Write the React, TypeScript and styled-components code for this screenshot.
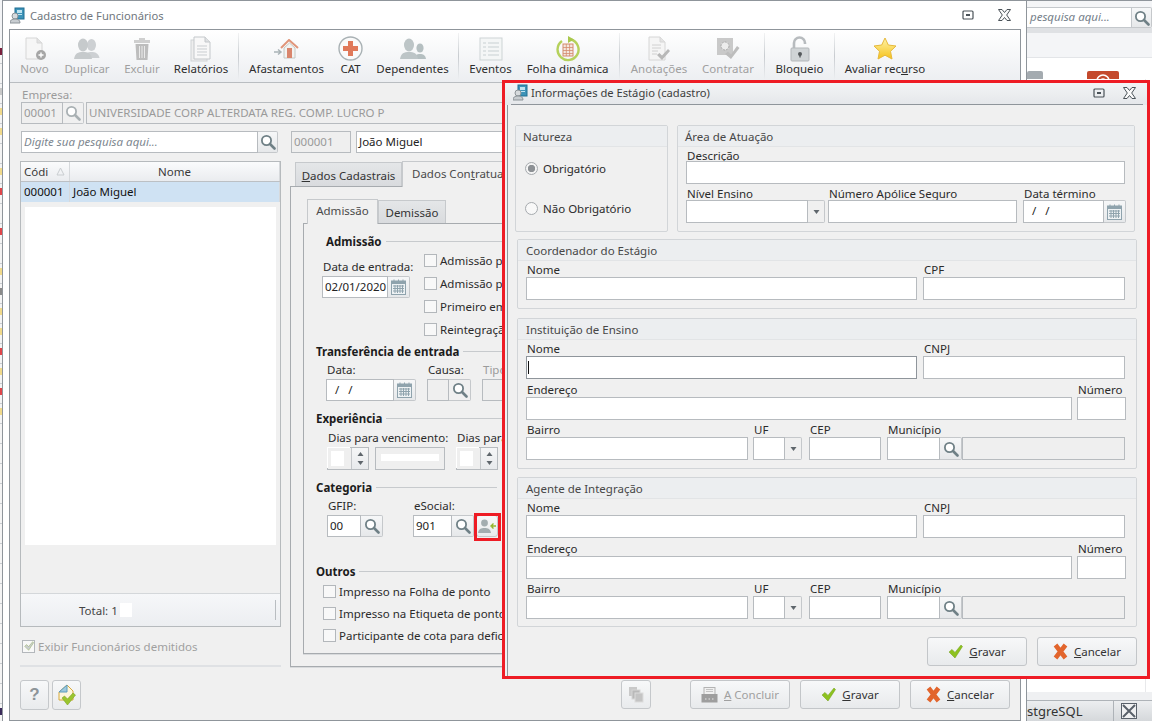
import React from "react";
import styled, { createGlobalStyle } from "styled-components";

const GlobalStyle = createGlobalStyle`
  html, body {
    margin: 0;
    padding: 0;
    background: #f3f4f6;
  }
  body {
    font-family: "Noto Sans", "Open Sans", sans-serif;
    font-size: 11.5px;
    color: #2b2b2b;
  }
  * { box-sizing: border-box; }
`;

const Desktop = styled.div`
  position: relative;
  width: 1152px;
  height: 721px;
  overflow: hidden;
  background: #f3f4f6;
`;

/* windows behind the two open forms */
const LeftStrip = styled.div`
  position: absolute;
  left: 0;
  top: 44px;
  width: 2px;
  display: flex;
  flex-direction: column;
`;

const StripRow = styled.div<{ $mark?: string }>`
  height: 20px;
  border-bottom: 1px solid #c9ccd0;
  background: linear-gradient(
    #f4f4f4 0 4px,
    ${({ $mark }) => $mark || "#f4f4f4"} 4px 11px,
    #f4f4f4 11px
  );
`;

const BackPanel = styled.div`
  position: absolute;
  left: 1027px;
  right: 0;
  top: 0;
  bottom: 0;
  display: flex;
  flex-direction: column;
  background: #fff;
  border-top: 1px solid #8f959b;
`;

const BackSearchRow = styled.div`
  display: flex;
  height: 27px;
  padding-top: 6px;
  background: #f4f5f7;
`;

const BackSearchInput = styled.div`
  width: 105px;
  height: 21px;
  background: #fff;
  border: 1px solid #c4c8cc;
  border-left: 0;
  font-style: italic;
  font-size: 11.5px;
  line-height: 18px;
  padding-left: 3px;
  color: #75808a;
  white-space: nowrap;
`;

const BackBand = styled.div`
  height: 5px;
  background: #dfe1e4;
`;

const BackToolbar = styled.div`
  height: 25px;
  background: #f4f5f7;
  border-bottom: 1px solid #e3e5e8;
`;

const BackTiles = styled.div`
  display: flex;
  justify-content: space-between;
  padding: 13px 33px 0 0;
  height: 21px;
  overflow: hidden;
`;

const BackTile = styled.div<{ $color: string; $w: number }>`
  width: ${({ $w }) => $w}px;
  height: 30px;
  display: flex;
  justify-content: center;
  padding-top: 2px;
  background: ${({ $color }) => $color};
  border-radius: 2px 2px 0 0;
`;

const BackSpacer = styled.div`
  flex: 1;
  margin-right: 6px;
  border-right: 1px solid #e8e9eb;
`;

const BackLowBand = styled.div`
  height: 8px;
  background: #eff0f2;
`;

const BackTabBar = styled.div`
  height: 21px;
  display: flex;
  align-items: center;
  background: linear-gradient(#eceef0, #d5d8db);
  border-top: 1px solid #aeb3b8;
  font-size: 13px;
  color: #333;
`;

const BackTabText = styled.div`
  width: 87px;
  height: 100%;
  line-height: 20px;
  border-right: 1px solid #aeb3b8;
  overflow: hidden;
  white-space: nowrap;
`;

const BackTabIcon = styled.div`
  padding-left: 7px;
  display: flex;
  align-items: center;
`;

/* main window */
const MainWindow = styled.div`
  position: absolute;
  left: 2px;
  top: 0;
  width: 1025px;
  height: 722px;
  background: #fff;
  border: 1px solid #8f959b;
  border-bottom: 0;
  padding: 0 5px 0 6px;
  display: flex;
  flex-direction: column;
`;

const MainTitle = styled.div`
  height: 28px;
  flex: none;
  display: flex;
  align-items: center;
  gap: 5px;
  padding: 0 0 0 1px;
  font-size: 11.2px;
  color: #70777d;
`;

const WindowActions = styled.div<{ $gap: number; $right: number }>`
  margin-left: auto;
  margin-right: ${({ $right }) => $right}px;
  display: flex;
  align-items: center;
  gap: ${({ $gap }) => $gap}px;
`;

const MainPanel = styled.div`
  height: 692px;
  flex: none;
  background: #f0f0f0;
  border: 1px solid #8f959b;
  display: flex;
  flex-direction: column;
`;

const Toolbar = styled.div`
  height: 53px;
  flex: none;
  display: flex;
  gap: 16px;
  padding-left: 10px;
  background: linear-gradient(#ffffff, #eceef1);
  border-bottom: 1px solid #b9bdc1;
`;

const ToolItem = styled.div<{ $w: number; $off?: boolean }>`
  width: ${({ $w }) => $w}px;
  display: flex;
  flex-direction: column;
  align-items: center;
  padding-top: 6px;
  white-space: nowrap;
  color: ${({ $off }) => ($off ? "#a0a0a0" : "#2e2e2e")};
`;

const ToolIcon = styled.div`
  height: 25px;
  display: flex;
  align-items: center;
  justify-content: center;
`;

const ToolLabel = styled.div`
  line-height: 16px;
`;

const ToolSep = styled.div`
  width: 1px;
  height: 46px;
  margin: 3px -5px 0;
  background: linear-gradient(#f2f3f4, #c8ccd0 50%, #eceef1);
`;

const Underline = styled.span`
  text-decoration: underline;
`;

const Body = styled.div`
  flex: 1;
  padding: 5px 0 0 10px;
  display: flex;
  flex-direction: column;
`;

const FieldLabel = styled.div<{ $off?: boolean; $h?: number; $lh?: number }>`
  height: ${({ $h }) => $h ?? 14}px;
  line-height: ${({ $lh }) => $lh ?? 14}px;
  padding-left: 1px;
  white-space: nowrap;
  color: ${({ $off }) => ($off ? "#9b9b9b" : "#2b2b2b")};
`;

const Row = styled.div<{ $gap?: number; $top?: number; $left?: number }>`
  display: flex;
  gap: ${({ $gap }) => $gap ?? 0}px;
  margin-top: ${({ $top }) => $top ?? 0}px;
  margin-left: ${({ $left }) => $left ?? 0}px;
`;

const Col = styled.div<{ $w?: number; $top?: number; $left?: number }>`
  display: flex;
  flex-direction: column;
  flex: none;
  ${({ $w }) => ($w ? `width: ${$w}px;` : "")}
  margin-top: ${({ $top }) => $top ?? 0}px;
  margin-left: ${({ $left }) => $left ?? 0}px;
`;

const InputBox = styled.div<{ $w?: number; $h?: number; $off?: boolean; $italic?: boolean; $focus?: boolean }>`
  position: relative;
  flex: none;
  width: ${({ $w }) => ($w ? `${$w}px` : "100%")};
  height: ${({ $h }) => $h ?? 23}px;
  line-height: ${({ $h }) => ($h ?? 23) - 3}px;
  padding-left: 2px;
  background: ${({ $off }) => ($off ? "#efefef" : "#fff")};
  border: 1px solid ${({ $focus }) => ($focus ? "#8f959b" : "#b7bbbf")};
  color: ${({ $off, $italic }) => ($off ? "#9a9a9a" : $italic ? "#7d8790" : "#222")};
  font-style: ${({ $italic }) => ($italic ? "italic" : "normal")};
  overflow: hidden;
  white-space: pre;
`;

const Caret = styled.div`
  position: absolute;
  left: 1px;
  top: 4px;
  width: 1px;
  height: 13px;
  background: #111;
`;

const SideButton = styled.div<{ $w?: number; $h?: number; $flat?: boolean }>`
  flex: none;
  width: ${({ $w }) => $w ?? 22}px;
  height: ${({ $h }) => $h ?? 23}px;
  display: flex;
  align-items: center;
  justify-content: center;
  background: ${({ $flat }) => ($flat ? "#f0f0f0" : "linear-gradient(#f6f7f8, #e6e8ea)")};
  border: 1px solid #c5c8cb;
  border-left: 0;
  border-radius: 0 2px 2px 0;
`;

const Block = styled.div<{ $ml?: number; $gap?: number }>`
  display: flex;
  gap: ${({ $gap }) => $gap ?? 0}px;
  margin-left: ${({ $ml }) => $ml ?? 0}px;
`;

const LeftCol = styled.div`
  width: 261px;
  flex: none;
  display: flex;
  flex-direction: column;
`;

const RightCol = styled.div`
  margin-left: 9px;
  width: 720px;
  flex: none;
  display: flex;
  flex-direction: column;
`;

const Grid = styled.div`
  height: 466px;
  margin-top: 8px;
  border: 1px solid #b6babd;
  display: flex;
  flex-direction: column;
  background: #f0f0f0;
`;

const GridHead = styled.div`
  display: flex;
  height: 20px;
  flex: none;
  background: linear-gradient(#fafbfc, #eaecef);
  border-bottom: 1px solid #bcc0c4;
  line-height: 19px;
  color: #3a3a3a;
`;

const GridCell = styled.div<{ $w?: number; $center?: boolean }>`
  ${({ $w }) => ($w ? `width: ${$w}px; flex: none;` : "flex: 1;")}
  padding-left: ${({ $center }) => ($center ? 0 : 3)}px;
  text-align: ${({ $center }) => ($center ? "center" : "left")};
  border-right: 1px solid #d6d9dc;
  display: flex;
  align-items: center;
  justify-content: ${({ $center }) => ($center ? "center" : "space-between")};
  white-space: nowrap;
`;

const SortSlot = styled.span`
  display: flex;
  margin-right: 4px;
`;

const GridRow = styled.div`
  display: flex;
  height: 20px;
  flex: none;
  background: #cfe2f3;
  line-height: 18px;
  color: #111;
`;

const GridBlank = styled.div`
  height: 338px;
  margin: 5px 4px 0;
  background: #fff;
`;

const GridFooter = styled.div`
  margin-top: auto;
  height: 33px;
  flex: none;
  display: flex;
  align-items: center;
  padding-left: 58px;
  gap: 2px;
  background: linear-gradient(#f6f7f9, #eceef1);
  border-top: 1px solid #d4d7da;
  color: #444;
`;

const TotalBox = styled.div`
  width: 12px;
  height: 14px;
  background: #fff;
`;

const FooterBar = styled.div`
  margin-left: auto;
  margin-right: 4px;
  width: 1px;
  height: 20px;
  background: #b9bdc1;
`;

const CheckRow = styled.div<{ $h?: number; $off?: boolean; $gap?: number }>`
  display: flex;
  align-items: center;
  height: ${({ $h }) => $h ?? 22}px;
  gap: ${({ $gap }) => $gap ?? 4}px;
  white-space: nowrap;
  color: ${({ $off }) => ($off ? "#a0a0a0" : "#2b2b2b")};
`;

const CheckBox = styled.div`
  width: 13px;
  height: 13px;
  flex: none;
  background: #f8f8f8;
  border: 1px solid #b3b7bb;
  display: flex;
  align-items: center;
  justify-content: center;
`;

const Divider = styled.div`
  height: 2px;
  margin-top: 12px;
  background: #dfe1e4;
`;

const SquareButton = styled.div<{ $w: number; $h: number }>`
  width: ${({ $w }) => $w}px;
  height: ${({ $h }) => $h}px;
  flex: none;
  display: flex;
  align-items: center;
  justify-content: center;
  border: 1px solid #c5c8cb;
  border-radius: 3px;
  background: linear-gradient(#f7f8f9, #e9ebed);
`;

const QuestionMark = styled.span`
  font-family: "Liberation Sans", sans-serif;
  font-size: 17px;
  font-weight: 700;
  color: #8d9499;
`;

const TabStrip = styled.div<{ $h: number; $left: number; $top: number }>`
  height: ${({ $h }) => $h}px;
  margin-top: ${({ $top }) => $top}px;
  padding-left: ${({ $left }) => $left}px;
  display: flex;
  align-items: flex-end;
  position: relative;
  z-index: 1;
`;

const Tab = styled.div<{ $w: number; $active?: boolean; $h: number; $pad?: number }>`
  width: ${({ $w }) => $w}px;
  height: ${({ $h }) => $h}px;
  flex: none;
  text-align: ${({ $pad }) => ($pad ? "left" : "center")};
  padding-left: ${({ $pad }) => $pad ?? 0}px;
  line-height: ${({ $h, $active }) => ($active ? $h - 3 : $h + 1)}px;
  white-space: nowrap;
  border: 1px solid #c6c9cc;
  border-bottom: 0;
  color: ${({ $active }) => ($active ? "#4a4a4a" : "#333")};
  background: ${({ $active }) => ($active ? "#f0f0f0" : "linear-gradient(#e4e6e8, #d9dbde)")};
  ${({ $active }) => ($active ? "margin-bottom: -1px;" : "")}
`;

const TabPanel = styled.div`
  height: 481px;
  border: 1px solid #a7abaf;
  padding: 11px 0 0 12px;
  display: flex;
  flex-direction: column;
  box-shadow: 0 1px 0 #d8dadc;
`;

const InnerPanel = styled.div`
  height: 431px;
  border: 1px solid #a7abaf;
  padding-top: 10px;
  display: flex;
  flex-direction: column;
  box-shadow: 0 1px 0 #d8dadc;
`;

const Heading = styled.div<{ $left?: number; $top?: number; $right?: number }>`
  display: flex;
  align-items: center;
  gap: 4px;
  height: 14px;
  margin-top: ${({ $top }) => $top ?? 0}px;
  margin-left: ${({ $left }) => $left ?? 12}px;
  margin-right: ${({ $right }) => $right ?? 480}px;
  font-weight: 700;
  color: #1c1c1c;
  white-space: nowrap;
  &::after {
    content: "";
    flex: 1;
    height: 1px;
    background: #c7cacd;
  }
`;

const SpinBox = styled.div`
  width: 42px;
  height: 23px;
  flex: none;
  display: flex;
  border: 1px solid #b7bbbf;
  background: #efefef;
`;

const SpinValue = styled.div`
  flex: 1;
  background: #fff;
  border: 3px solid #efefef;
  border-right-width: 7px;
  box-shadow: -1px -1px 0 #fff;
`;

const SpinArrows = styled.div`
  width: 17px;
  flex: none;
  display: flex;
  flex-direction: column;
  align-items: center;
  justify-content: center;
  gap: 5px;
  background: linear-gradient(#f5f6f7, #e8eaec);
  border-left: 1px solid #c5c8cb;
`;

const DisabledBand = styled.div`
  width: 70px;
  height: 23px;
  flex: none;
  padding: 6px 5px;
  background: #efefef;
  border: 1px solid #b7bbbf;
`;

const DisabledBandFill = styled.div`
  height: 7px;
  background: #fff;
`;

const BoxMark = styled.div`
  position: absolute;
  left: 474px;
  top: 513px;
  width: 27px;
  height: 28px;
  border: 3px solid #ee1c25;
  z-index: 2;
`;

const ActionButton = styled.div<{ $off?: boolean; $ml?: number }>`
  width: 100px;
  height: 29px;
  flex: none;
  margin-left: ${({ $ml }) => $ml ?? 0}px;
  display: flex;
  align-items: center;
  justify-content: center;
  gap: 6px;
  border: 1px solid #c3c6c9;
  border-radius: 3px;
  background: linear-gradient(#f7f8f9, #e8eaec);
  color: ${({ $off }) => ($off ? "#a0a0a0" : "#333")};
`;

/* dialog window */
const Dialog = styled.div`
  position: absolute;
  left: 502px;
  top: 80px;
  width: 648px;
  height: 599px;
  border: 3px solid #ee1c25;
  background: #f0f0f0;
  z-index: 3;
  display: flex;
  flex-direction: column;
`;

const DialogTitle = styled.div`
  height: 22px;
  flex: none;
  display: flex;
  align-items: center;
  gap: 3px;
  padding: 0 0 3px 8px;
  font-size: 11.2px;
  color: #3c3c3c;
  background: linear-gradient(#f2f4f6, #e5e7ea);
  position: relative;
  &::after {
    content: "";
    position: absolute;
    left: 6px;
    right: 4px;
    bottom: 0;
    height: 1px;
    background: #8f959b;
  }
`;

const DialogBody = styled.div`
  flex: 1;
  margin-left: 2px;
  border-left: 1px solid #8f959b;
  padding: 20px 0 0 7px;
  display: flex;
  flex-direction: column;
`;

const Group = styled.div<{ $w?: number; $h: number; $top?: number; $left?: number }>`
  width: ${({ $w }) => $w ?? 620}px;
  height: ${({ $h }) => $h}px;
  margin-top: ${({ $top }) => $top ?? 0}px;
  margin-left: ${({ $left }) => $left ?? 0}px;
  flex: none;
  border: 1px solid #d2d5d8;
  border-radius: 2px;
  display: flex;
  flex-direction: column;
`;

const GroupHead = styled.div<{ $left?: number }>`
  height: 21px;
  flex: none;
  line-height: 22px;
  padding-left: ${({ $left }) => $left ?? 7}px;
  background: #eceef0;
  border-bottom: 1px solid #e2e4e6;
  color: #474747;
  white-space: nowrap;
`;

const GroupBody = styled.div<{ $top?: number; $gap?: number }>`
  display: flex;
  flex-direction: column;
  padding: ${({ $top }) => $top ?? 2}px 0 0 8px;
  gap: ${({ $gap }) => $gap ?? 4}px;
`;

const RadioList = styled.div`
  padding-top: 1px;
`;

const RadioRow = styled.div`
  display: flex;
  align-items: center;
  gap: 5px;
  height: 40px;
  padding-left: 9px;
  white-space: nowrap;
`;

const Radio = styled.div<{ $on?: boolean }>`
  width: 13px;
  height: 13px;
  border-radius: 50%;
  border: 1px solid #a6aaae;
  background: ${({ $on }) =>
    $on ? "radial-gradient(circle, #8d9195 0 3.4px, #f4f4f4 4px)" : "#f8f8f8"};
`;

const DialogActions = styled.div`
  margin-top: 10px;
  margin-left: 412px;
  display: flex;
  gap: 10px;
`;

/* icons */
const WinIcon = () => (
  <svg width="15" height="17" viewBox="0 0 15 17">
    <rect x="5" y="1" width="9" height="11" fill="#3d93b8" stroke="#1f6f93" />
    <rect x="7" y="3" width="5" height="3" fill="#bfe3f0" />
    <rect x="7" y="7" width="5" height="1" fill="#bfe3f0" />
    <circle cx="5" cy="9" r="3" fill="#d6dadd" stroke="#8c9398" />
    <path d="M0 16c0-3 2-4 5-4s5 1 5 4z" fill="#c8cdd1" stroke="#8c9398" />
  </svg>
);

const RestoreIcon = () => (
  <svg width="12" height="10" viewBox="0 0 12 10">
    <rect x="1" y="1" width="10" height="8" rx="1" fill="none" stroke="#4a5258" strokeWidth="1.2" />
    <rect x="4" y="4" width="4" height="2" fill="#4a5258" />
  </svg>
);

const CloseIcon = () => (
  <svg width="13" height="12" viewBox="0 0 13 12">
    <path
      d="M0.500 0.500h3.500l2.500 3 2.500-3h3.500L8.700 6l3.800 5.500H9l-2.500-3-2.500 3H0.500L4.300 6z"
      fill="#fafafa"
      stroke="#4a5258"
    />
  </svg>
);

const SearchIcon = ({ size = 16, color = "#6f8086" }: { size?: number; color?: string }) => (
  <svg width={size} height={size} viewBox="0 0 16 16">
    <circle cx="6.500" cy="6.500" r="4.600" fill="#fff" stroke={color} strokeWidth="1.800" />
    <path d="M10 10l4.500 4.500" stroke={color} strokeWidth="2.600" strokeLinecap="round" />
  </svg>
);

const CalendarIcon = () => (
  <svg width="15" height="16" viewBox="0 0 15 16">
    <rect x="0.500" y="2" width="14" height="13.500" fill="#eef2f4" stroke="#8fa3ad" />
    <rect x="0.500" y="2" width="14" height="3" fill="#8fa3ad" />
    <path d="M3 0.500v3M7.500 0.500v3M12 0.500v3" stroke="#8fa3ad" />
    <path d="M2 7h11M2 9.500h11M2 12h11M4 6v8M6.500 6v8M9 6v8M11.500 6v8" stroke="#8fa3ad" strokeWidth="1" />
  </svg>
);

const Arrow = ({ up }: { up?: boolean }) => (
  <svg width="7" height="4" viewBox="0 0 7 4">
    <path d={up ? "M0.500 4L3.500 0l3 4z" : "M0.500 0l3 4 3-4z"} fill="#5f666c" />
  </svg>
);

const SortArrow = () => (
  <svg width="9" height="9" viewBox="0 0 9 9">
    <path d="M4.500 1L8 8H1z" fill="none" stroke="#c9cdd0" />
  </svg>
);

const CheckGlyph = ({ w = 15, color = "#8dc21f" }: { w?: number; color?: string }) => (
  <svg width={w} height={w} viewBox="0 0 15 15">
    <path d="M1 8l3-2.600 3 3L13 1l1.500 1.500L7 14z" fill={color} stroke="#6f9c17" strokeWidth="0.500" />
  </svg>
);

const CrossGlyph = () => (
  <svg width="15" height="17" viewBox="0 0 15 17">
    <path d="M2.500 2L12.500 15M12.500 2L2.500 15" stroke="#e2652d" strokeWidth="4.600" />
  </svg>
);

const NewDocIcon = () => (
  <svg width="24" height="24" viewBox="0 0 24 24">
    <path d="M3 1h11l5 5v16H3z" fill="#f6f6f6" stroke="#d6d6d6" />
    <path d="M14 1v5h5" fill="#e2e2e2" stroke="#d6d6d6" />
    <circle cx="18" cy="18" r="5" fill="#a6a6a6" />
    <path d="M15.500 18h5M18 15.500v5" stroke="#fff" strokeWidth="1.400" />
  </svg>
);

const PeopleIcon = ({ second = "#cdd0d3" }: { second?: string }) => (
  <svg width="26" height="22" viewBox="0 0 26 22">
    <ellipse cx="17.500" cy="7" rx="4.500" ry="6" fill={second} />
    <path d="M10 20c1-5 4-6 7.500-6s7 1 8 6z" fill={second} />
    <ellipse cx="9" cy="7" rx="5" ry="6.500" fill="#c6cacc" />
    <path d="M0 21c1-6 4-7 9-7s8 1 9 7z" fill="#c6cacc" />
  </svg>
);

const DependentsIcon = () => (
  <svg width="26" height="22" viewBox="0 0 26 22">
    <ellipse cx="20" cy="10" rx="3.600" ry="4.600" fill="#b5bfc1" />
    <path d="M14 21c.6-4 3-5 6-5s5.400 1 6 5z" fill="#b5bfc1" />
    <ellipse cx="9" cy="7" rx="5" ry="6.500" fill="#bdc5c7" />
    <path d="M0 21c1-6 4-7 9-7s8 1 9 7z" fill="#bdc5c7" />
  </svg>
);

const TrashIcon = () => (
  <svg width="18" height="24" viewBox="0 0 18 24">
    <rect x="1" y="3" width="16" height="3" fill="#cfcfcf" />
    <rect x="6" y="1" width="6" height="2" fill="#cfcfcf" />
    <path d="M2.500 7h13l-1 16h-11z" fill="#bdbdbd" />
    <path d="M6.500 9v12M9 9v12M11.500 9v12" stroke="#eaeaea" />
  </svg>
);

const ReportIcon = () => (
  <svg width="22" height="26" viewBox="0 0 22 26">
    <rect x="1" y="4" width="16" height="21" fill="#eee" stroke="#d0d3d6" />
    <path d="M4 1h11l5 5v17H4z" fill="#f8f8f8" stroke="#c4c8cb" />
    <path d="M15 1v5h5" fill="#dfe1e3" stroke="#c4c8cb" />
    <path d="M7 10h10M7 13h10M7 16h10M7 19h10" stroke="#c9cdd0" />
  </svg>
);

const HouseIcon = () => (
  <svg width="25" height="20" viewBox="0 0 25 20">
    <path d="M0 13h6M4 10.500l3 2.500-3 2.500" stroke="#a9b3b6" strokeWidth="1.500" fill="none" />
    <path d="M7 9l8-8 9 8" fill="none" stroke="#e0957a" strokeWidth="2" />
    <path d="M10 9v10h11V9l-5.500-5z" fill="#f3f3f1" stroke="#c4c8c4" />
    <rect x="13" y="9" width="5" height="10" fill="#d9856c" />
  </svg>
);

const CrossCircleIcon = () => (
  <svg width="25" height="25" viewBox="0 0 25 25">
    <circle cx="12.500" cy="12.500" r="11.500" fill="#fafafa" stroke="#a9b1b4" strokeWidth="1.400" />
    <path d="M10 5h5v5h5v5h-5v5h-5v-5H5v-5h5z" fill="#e0795a" />
  </svg>
);

const ListIcon = () => (
  <svg width="24" height="24" viewBox="0 0 24 24">
    <rect x="1" y="1" width="22" height="22" fill="#f4f6f6" stroke="#cdd4d5" />
    <path d="M4 6h3M9 6h11M4 10h3M9 10h11M4 14h3M9 14h11M4 18h3M9 18h11" stroke="#c8d0d2" strokeWidth="1.200" />
  </svg>
);

const CalcCycleIcon = () => (
  <svg width="24" height="26" viewBox="0 0 24 26">
    <path d="M6 5a10.500 10.500 0 1 0 9-1.500" fill="none" stroke="#b5d15c" strokeWidth="2.400" />
    <path d="M12 0l6 3.500-6 3.500z" fill="#a9c84c" />
    <rect x="7" y="8" width="10" height="12" fill="#f3e7df" stroke="#d48b6e" />
    <path d="M7 11.500h10M7 14.500h10M7 17.500h10M10.300 8v12M13.600 8v12" stroke="#d48b6e" strokeWidth="0.800" />
  </svg>
);

const NoteCheckIcon = () => (
  <svg width="24" height="25" viewBox="0 0 24 25">
    <path d="M2 1h11l5 5v18H2z" fill="#f5f5f5" stroke="#d6d6d6" />
    <path d="M13 1v5h5" fill="#e4e4e4" stroke="#d6d6d6" />
    <path d="M5 9h9M5 12h9M5 15h6M5 18h5" stroke="#d0d0d0" />
    <path d="M10 19l2.500-2 2.500 2.500L21 13l2 2-8 9z" fill="#b8b8b8" />
  </svg>
);

const HireIcon = () => (
  <svg width="24" height="24" viewBox="0 0 24 24">
    <rect x="1" y="1" width="16" height="17" fill="#c9c9c9" />
    <circle cx="9" cy="9" r="4" fill="#ececec" stroke="#a9a9a9" strokeDasharray="2 1" />
    <path d="M9 17l3-2.500 3 3L21 9l2.500 2-8.500 11z" fill="#bdbdbd" />
  </svg>
);

const LockIcon = () => (
  <svg width="20" height="26" viewBox="0 0 20 26">
    <path d="M4 12V7a5.500 5.500 0 0 1 11 0v1" fill="none" stroke="#b7bbbe" strokeWidth="2.600" />
    <rect x="1" y="12" width="18" height="13" rx="1" fill="#d0d4d6" stroke="#b3b7ba" />
    <circle cx="10" cy="18" r="2" fill="#55595c" />
    <rect x="9.300" y="18" width="1.400" height="3.500" fill="#55595c" />
  </svg>
);

const StarIcon = () => (
  <svg width="24" height="24" viewBox="0 0 24 24">
    <defs>
      <linearGradient id="star" x1="0" y1="0" x2="0" y2="1">
        <stop offset="0" stopColor="#fff3a8" />
        <stop offset="1" stopColor="#f5c21b" />
      </linearGradient>
    </defs>
    <path
      d="M12 1l3.300 7 7.700 1-5.500 5.300L19 22l-7-3.800L5 22l1.500-7.700L1 9l7.700-1z"
      fill="url(#star)"
      stroke="#e6b93c"
      strokeLinejoin="round"
    />
  </svg>
);

const PersonAddIcon = () => (
  <svg width="18" height="14" viewBox="0 0 18 14">
    <circle cx="6.500" cy="4" r="3.400" fill="#a3adb0" />
    <path d="M0 14c.5-4 3-5 6.500-5s6 1 6.500 5z" fill="#a3adb0" />
    <path d="M18 7h-4M15.500 4.500L13 7l2.500 2.500" stroke="#94b42c" strokeWidth="1.400" fill="none" />
  </svg>
);

const ConcludeIcon = () => (
  <svg width="17" height="16" viewBox="0 0 17 16">
    <rect x="3" y="0.500" width="11" height="7" fill="#f0f0f0" stroke="#b3b3b3" />
    <path d="M5 2.500h7M5 4.500h7" stroke="#c4c4c4" />
    <rect x="0.500" y="7" width="16" height="8.500" fill="#9e9e9e" />
    <path d="M4 12h1.500M7.500 12H9M11 12h1.500" stroke="#e6e6e6" />
  </svg>
);

const CopiesIcon = () => (
  <svg width="17" height="17" viewBox="0 0 17 17">
    <rect x="1" y="1" width="8" height="9" fill="#c9c9c9" />
    <rect x="4" y="4" width="8" height="9" fill="#b9b9b9" stroke="#d6d6d6" />
    <rect x="7" y="7" width="8" height="9" fill="#c4c4c4" stroke="#dcdcdc" />
  </svg>
);

const DocCheckIcon = () => (
  <svg width="20" height="22" viewBox="0 0 20 22">
    <path d="M2 8l8-7 6 6v9H2z" fill="#fdf6dc" stroke="#d8a93a" />
    <path d="M2 8l8-7v7z" fill="#9cc9df" stroke="#5f9cbc" />
    <path d="M5 14l2.500-2 3 3L16 9l2.500 2-8 10z" fill="#9ac52e" stroke="#7ea321" strokeWidth="0.600" />
  </svg>
);

const TabGlyph = () => (
  <svg width="20" height="17" viewBox="0 0 20 17">
    <rect x="0.500" y="0.500" width="15" height="15" fill="#f0f1f2" stroke="#59616a" />
    <path d="M2 2l12 12M14 2L2 14" stroke="#59616a" strokeWidth="2" />
  </svg>
);

const RedTileMark = () => (
  <svg width="16" height="8" viewBox="0 0 16 8">
    <path d="M2 8a6 6 0 0 1 12 0" fill="none" stroke="#fff" strokeWidth="1.600" />
    <path d="M6 8a2 2 0 0 1 4 0" fill="none" stroke="#fff" strokeWidth="1.600" />
  </svg>
);

const InputWithCalendar = ({ w, value, h = 22 }: { w: number; value: string; h?: number }) => (
  <Block>
    <InputBox $w={w} $h={h}>
      {value}
    </InputBox>
    <SideButton $h={h}>
      <CalendarIcon />
    </SideButton>
  </Block>
);

const SearchField = ({ w, value, flat }: { w: number; value?: string; flat?: boolean }) => (
  <Block>
    <InputBox $w={w} $h={22} $off={flat}>
      {value}
    </InputBox>
    <SideButton $h={22} $flat={flat}>
      <SearchIcon />
    </SideButton>
  </Block>
);

const Select = ({ w }: { w: number }) => (
  <Block>
    <InputBox $w={w - 17} />
    <SideButton $w={17} $flat>
      <Arrow />
    </SideButton>
  </Block>
);

const Spin = () => (
  <SpinBox>
    <SpinValue />
    <SpinArrows>
      <Arrow up />
      <Arrow />
    </SpinArrows>
  </SpinBox>
);

const tools = [
  { label: "Novo", w: 29, off: true, icon: <NewDocIcon /> },
  { label: "Duplicar", w: 44, off: true, icon: <PeopleIcon /> },
  { label: "Excluir", w: 34, off: true, icon: <TrashIcon /> },
  { label: "Relatórios", w: 52, icon: <ReportIcon />, sep: true },
  { label: "Afastamentos", w: 73, icon: <HouseIcon /> },
  { label: "CAT", w: 23, icon: <CrossCircleIcon /> },
  { label: "Dependentes", w: 69, icon: <DependentsIcon />, sep: true },
  { label: "Eventos", w: 41, icon: <ListIcon /> },
  { label: "Folha dinâmica", w: 81, icon: <CalcCycleIcon />, sep: true },
  { label: "Anotações", w: 56, off: true, icon: <NoteCheckIcon /> },
  { label: "Contratar", w: 50, off: true, icon: <HireIcon />, sep: true },
  { label: "Bloqueio", w: 47, icon: <LockIcon />, sep: true },
  { label: "Avaliar recurso", w: 78, icon: <StarIcon />, accent: true },
];

const Y = "#f0d98a";
const R = "#e0464a";
const stripMarks = [
  "#7a1f3d", "", "#c8c8c8", Y, Y, "", Y, R, "", R, "", Y, "#8a8a8a", Y, Y, R, Y, R, Y, "",
  "", "", "", "", "", "", "", "", "", "", "", "", "", "#3a2a5a",
];

const AddressRows = () => (
  <>
    <Row $gap={5}>
      <Col $w={546}>
        <FieldLabel>Endereço</FieldLabel>
        <InputBox />
      </Col>
      <Col $w={49}>
        <FieldLabel>Número</FieldLabel>
        <InputBox />
      </Col>
    </Row>
    <Row $top={-1}>
      <Col $w={222}>
        <FieldLabel>Bairro</FieldLabel>
        <InputBox />
      </Col>
      <Col $w={49} $left={5}>
        <FieldLabel>UF</FieldLabel>
        <Select w={49} />
      </Col>
      <Col $w={72} $left={7}>
        <FieldLabel>CEP</FieldLabel>
        <InputBox />
      </Col>
      <Col $w={238} $left={6}>
        <FieldLabel>Município</FieldLabel>
        <Block>
          <InputBox $w={53} />
          <SideButton $w={22}>
            <SearchIcon />
          </SideButton>
          <InputBox $w={163} $off />
        </Block>
      </Col>
    </Row>
  </>
);

const NameRow = ({ doc, focus }: { doc: string; focus?: boolean }) => (
  <Row $gap={6}>
    <Col $w={391}>
      <FieldLabel>Nome</FieldLabel>
      <InputBox $focus={focus}>{focus && <Caret />}</InputBox>
    </Col>
    <Col $w={202}>
      <FieldLabel>{doc}</FieldLabel>
      <InputBox />
    </Col>
  </Row>
);

const App = () => {
  return (
    <Desktop>
      <GlobalStyle />

      <LeftStrip>
        {stripMarks.map((mark, i) => (
          <StripRow key={i} $mark={mark} />
        ))}
      </LeftStrip>

      <BackPanel>
        <BackSearchRow>
          <BackSearchInput>pesquisa aqui...</BackSearchInput>
          <SideButton $w={20} $h={21}>
            <SearchIcon />
          </SideButton>
        </BackSearchRow>
        <BackBand />
        <BackToolbar />
        <BackTiles>
          <BackTile $color="#a4abb0" $w={16} />
          <BackTile $color="#c4492c" $w={32}>
            <RedTileMark />
          </BackTile>
        </BackTiles>
        <BackSpacer />
        <BackLowBand />
        <BackTabBar>
          <BackTabText>stgreSQL</BackTabText>
          <BackTabIcon>
            <TabGlyph />
          </BackTabIcon>
        </BackTabBar>
      </BackPanel>

      <MainWindow>
        <MainTitle>
          <WinIcon />
          Cadastro de Funcionários
          <WindowActions $gap={24} $right={10}>
            <RestoreIcon />
            <CloseIcon />
          </WindowActions>
        </MainTitle>
        <MainPanel>
          <Toolbar>
            {tools.map((tool) => (
              <React.Fragment key={tool.label}>
                <ToolItem $w={tool.w} $off={tool.off}>
                  <ToolIcon>{tool.icon}</ToolIcon>
                  <ToolLabel>
                    {tool.accent ? (
                      <>
                        Avaliar rec<Underline>u</Underline>rso
                      </>
                    ) : (
                      tool.label
                    )}
                  </ToolLabel>
                </ToolItem>
                {tool.sep && <ToolSep />}
              </React.Fragment>
            ))}
          </Toolbar>

          <Body>
            <Col $left={1}>
              <FieldLabel $off>Empresa:</FieldLabel>
              <Block>
                <InputBox $w={42} $h={22} $off>
                  00001
                </InputBox>
                <SideButton $w={21} $h={22} $flat>
                  <SearchIcon color="#a9b0b3" />
                </SideButton>
                <Block $ml={2}>
                  <InputBox $w={440} $h={22} $off>
                    UNIVERSIDADE CORP ALTERDATA REG. COMP. LUCRO P
                  </InputBox>
                </Block>
              </Block>
            </Col>

            <Row $top={7}>
              <LeftCol>
                <Block $ml={1}>
                  <InputBox $w={237} $h={22} $italic>
                    Digite sua pesquisa aqui...
                  </InputBox>
                  <SideButton $w={20} $h={22}>
                    <SearchIcon />
                  </SideButton>
                </Block>
                <Grid>
                  <GridHead>
                    <GridCell $w={49}>
                      Códi
                      <SortSlot>
                        <SortArrow />
                      </SortSlot>
                    </GridCell>
                    <GridCell $center>Nome</GridCell>
                  </GridHead>
                  <GridRow>
                    <GridCell $w={49}>000001</GridCell>
                    <GridCell>João Miguel</GridCell>
                  </GridRow>
                  <GridBlank />
                  <GridFooter>
                    Total: 1
                    <TotalBox />
                    <FooterBar />
                  </GridFooter>
                </Grid>
                <Row $top={12} $left={2}>
                  <CheckRow $h={14} $off $gap={3}>
                    <CheckBox>
                      <CheckGlyph w={10} color="#c9cdd0" />
                    </CheckBox>
                    Exibir Funcionários demitidos
                  </CheckRow>
                </Row>
                <Divider />
                <Row $top={13} $gap={3}>
                  <SquareButton $w={29} $h={30}>
                    <QuestionMark>?</QuestionMark>
                  </SquareButton>
                  <SquareButton $w={29} $h={30}>
                    <DocCheckIcon />
                  </SquareButton>
                </Row>
              </LeftCol>

              <RightCol>
                <Row $left={1} $gap={5}>
                  <InputBox $w={60} $h={22} $off>
                    000001
                  </InputBox>
                  <InputBox $w={300} $h={22}>
                    João Miguel
                  </InputBox>
                </Row>
                <TabStrip $h={26} $left={5} $top={7}>
                  <Tab $w={107} $h={24}>
                    <Underline>D</Underline>ados Cadastrais
                  </Tab>
                  <Tab $w={110} $h={26} $pad={9} $active>
                    Dados Con<Underline>t</Underline>ratua
                  </Tab>
                </TabStrip>
                <TabPanel>
                  <TabStrip $h={25} $left={4} $top={0}>
                    <Tab $w={71} $h={25} $active>
                      Admissão
                    </Tab>
                    <Tab $w={68} $h={23}>
                      Demissão
                    </Tab>
                  </TabStrip>
                  <InnerPanel>
                    <Heading $left={22}>Admissão</Heading>
                    <Row $top={7} $left={18}>
                      <Col $w={102} $top={5}>
                        <FieldLabel $h={16}>Data de entrada:</FieldLabel>
                        <InputWithCalendar w={66} value="02/01/2020" />
                      </Col>
                      <Col $top={-6}>
                        {["Admissão p", "Admissão p", "Primeiro em", "Reintegraçã"].map((text, i) => (
                          <CheckRow key={i} $h={23} $gap={3}>
                            <CheckBox />
                            {text}
                          </CheckRow>
                        ))}
                      </Col>
                    </Row>
                    <Heading $top={3}>Transferência de entrada</Heading>
                    <Row $top={5} $left={22}>
                      <Col $w={90}>
                        <FieldLabel $h={16}>Data:</FieldLabel>
                        <InputWithCalendar w={68} value="  /   /" />
                      </Col>
                      <Col $w={55} $left={11}>
                        <FieldLabel $h={16}>Causa:</FieldLabel>
                        <SearchField w={22} flat />
                      </Col>
                      <Col $w={40}>
                        <FieldLabel $off $h={16}>
                          Tipo
                        </FieldLabel>
                        <InputBox $w={40} $h={22} $off />
                      </Col>
                    </Row>
                    <Heading $top={10}>Experiência</Heading>
                    <Row $top={6} $left={23}>
                      <Col $w={118}>
                        <FieldLabel $h={16}>Dias para vencimento:</FieldLabel>
                        <Row $gap={6}>
                          <Spin />
                          <DisabledBand>
                            <DisabledBandFill />
                          </DisabledBand>
                        </Row>
                      </Col>
                      <Col $left={11}>
                        <FieldLabel $h={16}>Dias para</FieldLabel>
                        <Spin />
                      </Col>
                    </Row>
                    <Heading $top={10} $right={511}>
                      Categoria
                    </Heading>
                    <Row $top={5} $left={23}>
                      <Col $w={86}>
                        <FieldLabel $h={16}>GFIP:</FieldLabel>
                        <SearchField w={34} value="00" />
                      </Col>
                      <Col>
                        <FieldLabel $h={16}>eSocial:</FieldLabel>
                        <Block $gap={2}>
                          <SearchField w={39} value="901" />
                          <SquareButton $w={22} $h={22}>
                            <PersonAddIcon />
                          </SquareButton>
                        </Block>
                      </Col>
                    </Row>
                    <Heading $top={27}>Outros</Heading>
                    <Col $left={19} $top={2}>
                      {[
                        "Impresso na Folha de ponto",
                        "Impresso na Etiqueta de ponto",
                        "Participante de cota para defici",
                      ].map((text) => (
                        <CheckRow key={text} $gap={3}>
                          <CheckBox />
                          {text}
                        </CheckRow>
                      ))}
                    </Col>
                  </InnerPanel>
                </TabPanel>
                <Row $top={13} $left={331} $gap={10}>
                  <SquareButton $w={30} $h={29}>
                    <CopiesIcon />
                  </SquareButton>
                  <ActionButton $off $ml={29}>
                    <ConcludeIcon />
                    <span>
                      <Underline>A</Underline> Concluir
                    </span>
                  </ActionButton>
                  <ActionButton>
                    <CheckGlyph />
                    <span>
                      <Underline>G</Underline>ravar
                    </span>
                  </ActionButton>
                  <ActionButton>
                    <CrossGlyph />
                    <span>
                      <Underline>C</Underline>ancelar
                    </span>
                  </ActionButton>
                </Row>
              </RightCol>
            </Row>
          </Body>
        </MainPanel>
      </MainWindow>

      <BoxMark />

      <Dialog>
        <DialogTitle>
          <WinIcon />
          Informações de Estágio (cadastro)
          <WindowActions $gap={18} $right={11}>
            <RestoreIcon />
            <CloseIcon />
          </WindowActions>
        </DialogTitle>
        <DialogBody>
          <Row $gap={9}>
            <Group $w={153} $h={107}>
              <GroupHead>Natureza</GroupHead>
              <RadioList>
                <RadioRow>
                  <Radio $on />
                  Obrigatório
                </RadioRow>
                <RadioRow>
                  <Radio />
                  Não Obrigatório
                </RadioRow>
              </RadioList>
            </Group>
            <Group $w={458} $h={107}>
              <GroupHead>Área de Atuação</GroupHead>
              <GroupBody $top={0} $gap={2}>
                <Col $w={439}>
                  <FieldLabel $lh={18}>Descrição</FieldLabel>
                  <InputBox />
                </Col>
                <Row>
                  <Col $w={139}>
                    <FieldLabel $lh={16}>Nível Ensino</FieldLabel>
                    <Select w={139} />
                  </Col>
                  <Col $w={189} $left={3}>
                    <FieldLabel $lh={16}>Número Apólice Seguro</FieldLabel>
                    <InputBox />
                  </Col>
                  <Col $w={102} $left={6}>
                    <FieldLabel $lh={16}>Data término</FieldLabel>
                    <InputWithCalendar w={81} value="  /   /" h={23} />
                  </Col>
                </Row>
              </GroupBody>
            </Group>
          </Row>

          <Group $h={70} $top={7} $left={2}>
            <GroupHead $left={8}>Coordenador do Estágio</GroupHead>
            <GroupBody>
              <NameRow doc="CPF" />
            </GroupBody>
          </Group>

          <Group $h={151} $top={9} $left={2}>
            <GroupHead $left={8}>Instituição de Ensino</GroupHead>
            <GroupBody>
              <NameRow doc="CNPJ" focus />
              <AddressRows />
            </GroupBody>
          </Group>

          <Group $h={150} $top={8} $left={2}>
            <GroupHead $left={8}>Agente de Integração</GroupHead>
            <GroupBody>
              <NameRow doc="CNPJ" />
              <AddressRows />
            </GroupBody>
          </Group>

          <DialogActions>
            <ActionButton>
              <CheckGlyph />
              <span>
                <Underline>G</Underline>ravar
              </span>
            </ActionButton>
            <ActionButton>
              <CrossGlyph />
              <span>
                <Underline>C</Underline>ancelar
              </span>
            </ActionButton>
          </DialogActions>
        </DialogBody>
      </Dialog>
    </Desktop>
  );
};

export default App;
